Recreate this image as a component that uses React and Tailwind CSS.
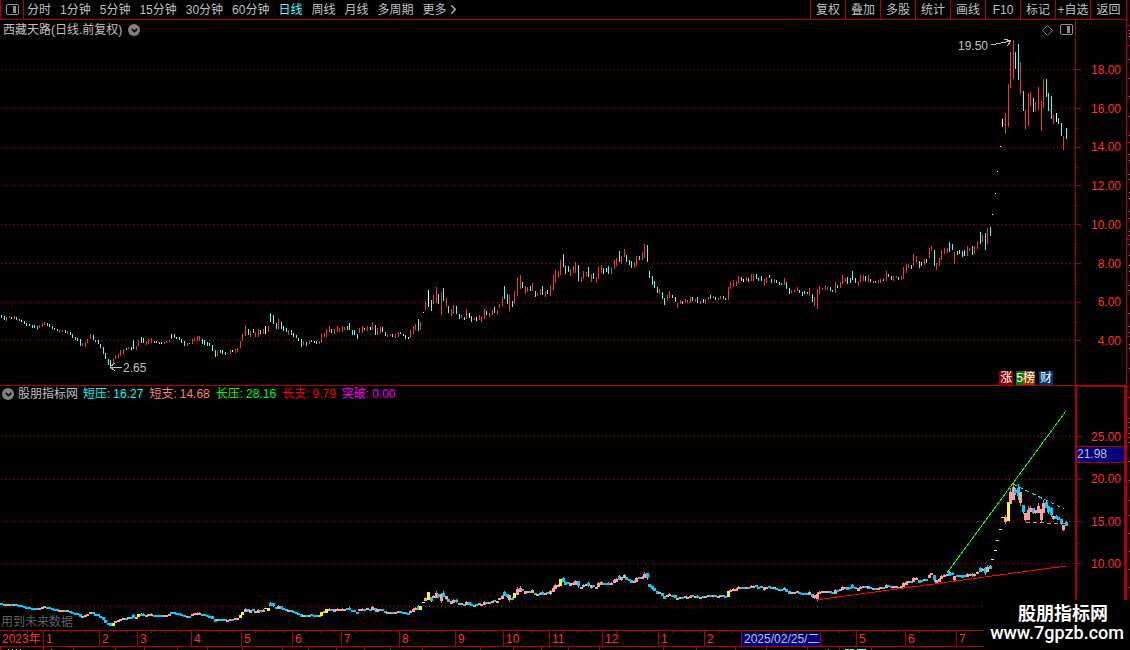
import { ChevronDown, ChevronRight } from 'lucide-react'

// One token per bar: kind + high/low in price-chart rows.
// c falling, r rising, w flat, y rising breakout, z flat breakout
const BARS = `
c315-318 c316-320 r317-321 r316-318 c317-319 r316-319 c317-320 c319-321 w320-322 c321-324 c323-326 c324-326
c325-328 c325-328 c326-329 r325-328 r323-327 r322-325 c323-326 c324-327 c326-329 c328-330 c329-331 r330-333
r330-332 c330-333 r331-334 c332-335 c334-338 c337-340 c338-341 c339-346 r343-346 r342-347 r339-343 r334-339
c335-340 c340-342 c340-344 c344-348 c347-354 c353-359 c359-365 c360-367 y359-364 r355-359 r354-358 r350-356
r349-354 c348-350 r347-349 c347-350 c340-349 r346-350 y340-346 c337-343 c338-343 r341-345 r339-344 r338-343
c341-343 c341-343 c342-344 w342-344 r342-344 r341-343 r340-342 c334-339 c334-338 c337-339 c337-340 c339-343
c341-346 r343-346 c343-344 r339-344 r338-341 r336-341 r336-341 c339-344 c340-345 c342-346 c343-346 c345-351
c350-357 r351-356 c350-353 c350-354 c352-355 r353-354 r350-354 w350-352 r349-353 r348-352 y341-348 y334-341
r326-336 c329-335 r331-337 c329-333 r332-337 r329-337 c330-334 r329-334 z326-334 y326-332 c313-322 c315-324
c323-329 r319-329 c322-329 c326-331 c328-332 r330-335 c330-335 c333-337 c335-338 c338-341 c339-347 r341-345
c342-346 r341-344 c340-342 c341-343 c341-344 r341-344 y334-343 r333-337 y329-337 r326-332 c329-333 r329-334
r326-332 r328-332 r326-332 r327-330 c326-330 c323-330 c330-335 c330-335 c334-339 r328-333 r326-333 c328-330
r326-331 w327-330 r322-330 c325-335 r328-335 r327-333 c327-332 c332-336 r334-337 r334-336 c334-337 r334-338
r332-337 c332-334 c334-336 c335-339 w337-339 r330-338 r326-334 r324-330 c319-331 y322-330 z312-313 r301-310
z290-307 c300-311 r295-304 r287-303 c294-304 r292-315 c288-301 r298-307 c306-313 r309-316 r305-314 c306-314
c314-319 r315-318 c317-320 r309-319 w313-318 c316-322 r318-320 w317-321 r315-320 r317-322 r309-319 c311-315
r313-317 r310-315 c307-313 r310-315 r304-308 r297-306 c286-299 c294-304 r295-311 c301-307 y291-304 r278-296
r275-289 c282-288 r286-294 r287-292 c286-291 r283-291 c291-297 r293-296 r289-295 c286-295 r291-297 c290-294
r285-296 r275-290 r270-283 r271-278 y260-275 c254-267 c266-274 c266-272 r269-276 r266-273 r262-273 c265-281
r277-282 r271-279 r272-276 c267-277 r274-282 c273-279 r277-283 r267-279 r265-273 c268-274 c268-272 c266-274
r267-274 r260-269 r258-266 c251-262 r256-264 r249-257 c255-262 c260-265 c261-268 r262-268 r256-266 c256-260
r252-260 r244-258 c245-262 c271-278 c276-285 c281-288 c287-293 r289-294 c292-299 c298-305 r295-301 r291-298
c295-298 c297-302 r303-308 r300-304 c301-304 r299-303 r300-303 r297-303 c297-301 r299-302 c297-303 r301-304
c299-303 r299-304 r297-300 c295-299 r296-298 c297-300 r298-300 r296-299 c296-299 c298-300 y287-300 r282-289
r280-287 r281-286 r276-283 c277-281 w279-282 r277-281 c278-282 r274-281 r274-281 c274-279 c278-281 c276-281
r279-286 r277-283 c275-278 c279-283 r279-283 c280-283 c282-285 c283-285 r278-285 c282-289 c288-294 r290-293
r290-292 r287-291 c290-293 c292-296 c291-294 c292-294 r288-296 c294-302 r297-306 r289-309 r286-294 r288-290
r286-290 r287-290 c287-291 c290-292 r282-293 c285-288 r282-288 r275-284 r278-282 c277-284 c278-283 c271-280
c278-283 r281-286 r275-282 r275-281 c276-281 r275-282 c279-282 r281-283 c281-283 r280-283 r279-283 c279-281
r271-281 c274-277 c276-280 r276-281 r276-278 c277-280 r276-280 r267-279 r264-273 r264-268 c265-269 r254-266
r256-263 c261-268 c262-266 r259-265 c259-263 r248-258 r246-251 c250-266 r263-270 r258-266 r250-260 r248-254
r248-253 c242-252 c244-250 r252-264 c251-255 c250-254 c251-257 c250-256 r246-256 r248-251 c246-255 r246-254
r241-249 c232-244 r235-242 c233-250 r228-244 c227-236 z214-215 z193-194 z171-172 z146-147 z119-127 r113-134
y84-127 r52-88 r40-79 c52-69 c44-80 r62-94 c91-111 r110-129 r93-126 r92-106 c98-112 r102-111 r87-110
r101-131 r79-108 c79-97 c93-111 c96-119 r115-124 w113-122 c118-124 c123-136 r136-150 c128-139
`
  .trim()
  .split(/\s+/)
  .map((t) => {
    const [high, low] = t.slice(1).split('-').map(Number)
    return { kind: t[0], high, low }
  })

const barX = (i) => 1 + Math.round((i * 1065) / (BARS.length - 1))

// price row -> indicator row (the lower pane has a flatter scale)
const toLower = (y) => Math.round(648.5 - ((418.2 - y) / 19.37) * 8.49)

const UPPER = { c: '#54fcfc', r: '#ff3232', w: '#ffffff', y: '#ff3232', z: '#ffffff' }
const LOWER = { c: '#00d0ff', r: '#ffa0a0', w: '#00d0ff', y: '#ffff00', z: '#ffff00' }
const WICK = { c: '#00e8ff', r: '#ff6060', w: '#00e8ff', y: '#ffff00', z: '#ffff00' }

const PERIODS = ['分时', '1分钟', '5分钟', '15分钟', '30分钟', '60分钟', '日线', '周线', '月线', '多周期', '更多']
const TOOLS = ['复权', '叠加', '多股', '统计', '画线', 'F10', '标记', '+自选', '返回']
const PRICES = ['18.00', '16.00', '14.00', '12.00', '10.00', '8.00', '6.00', '4.00']
const PRICE_ROWS = [69, 108, 147, 185, 224, 263, 302, 340]
const LEVELS = ['25.00', '20.00', '15.00', '10.00']
const LEVEL_ROWS = [436, 479, 521, 563]

const READINGS = [
  { label: '短压:', value: '16.27', color: 'text-[#00ffff]' },
  { label: '短支:', value: '14.68', color: 'text-[#ff8080]' },
  { label: '长压:', value: '28.16', color: 'text-[#00ff00]' },
  { label: '长支:', value: '9.79', color: 'text-[#ff0000]' },
  { label: '突破:', value: '0.00', color: 'text-[#ff00ff]' },
]

// label and number of chart pixels the month covers
const MONTHS = [
  ['2023年', 43], ['1', 56], ['2', 38], ['3', 54], ['4', 50], ['5', 51], ['6', 49], ['7', 58], ['8', 56],
  ['9', 48], ['10', 46], ['11', 53], ['12', 56], ['1', 46], ['2', 37], ['2025/02/25/二', 115], ['5', 49],
  ['6', 51], ['7', 119],
]

function PaneIcon({ className }) {
  return (
    <svg className={className} width="13" height="12" viewBox="0 0 13 12" shapeRendering="crispEdges" aria-hidden="true">
      <path d="M1 0h11v1h1v9h-1v1H1v-1H0V1h1zM1 1v9h11V1z" fill="#909090" fillRule="evenodd" />
      <rect x="7" y="2" width="3" height="7" fill="#909090" />
    </svg>
  )
}

function CollapseButton({ label }) {
  return (
    <button aria-label={label} className="flex size-3 items-center justify-center rounded-full bg-[#808080] text-black">
      <ChevronDown size={9} strokeWidth={4} />
    </button>
  )
}

function Toolbar() {
  return (
    <header className="flex h-5 items-stretch border-b border-[#b00000]">
      <button aria-label="侧栏" className="flex w-6 items-center justify-center border-x border-[#b00000]">
        <PaneIcon />
      </button>
      <nav className="ml-[3px] flex flex-1 items-center gap-[9px] whitespace-nowrap">
        {PERIODS.map((p) => (
          <button key={p} className={p === '日线' ? 'text-[#54fcfc]' : ''}>{p}</button>
        ))}
        <ChevronRight size={15} strokeWidth={2} className="-ml-2.5" />
      </nav>
      <nav className="flex">
        {TOOLS.map((t) => (
          <button key={t} className="w-[35px] border-l border-[#b00000] whitespace-nowrap last:w-[36px]">{t}</button>
        ))}
      </nav>
    </header>
  )
}

function Grid({ rows }) {
  return rows.map((y) => (
    <line key={y} x1="1" x2="1075" y1={y + 0.5} y2={y + 0.5} stroke="#b01010" strokeDasharray="1 3" />
  ))
}

function PriceChart() {
  return (
    <svg className="block h-full w-full" viewBox="0 20 1075 365" preserveAspectRatio="xMaxYMin slice" shapeRendering="crispEdges">
      <Grid rows={PRICE_ROWS} />
      {BARS.map((b, i) => (
        <rect key={i} x={barX(i)} y={b.high} width="1" height={b.low - b.high} fill={UPPER[b.kind]} />
      ))}
      <g fill="none" stroke="#c0c0c0">
        <path d="M991 45L1011 41M1004 39L1011 41L1007 46" />
        <path d="M122 367.5H110M115 363L110 367L115 371" />
      </g>
      <g fill="#c0c0c0" fontSize="12">
        <text x="958" y="50">19.50</text>
        <text x="123" y="372">2.65</text>
      </g>
    </svg>
  )
}

function Candle({ bar, prev, x }) {
  const high = toLower(bar.high)
  const low = Math.max(toLower(bar.low), high + 1)
  if (bar.kind === 'z' && low - high < 5) {
    return <rect x={x - 1} y={high} width="3" height="1" fill="#ffff00" />
  }
  if (bar.kind === 'y' || bar.kind === 'z') {
    return <rect x={x - 1} y={high} width="3" height={Math.max(low - high, 3)} fill={LOWER[bar.kind]} />
  }
  const mid = (high + low) / 2
  const prevMid = (toLower(prev.high) + toLower(prev.low)) / 2
  const reach = Math.max(1, (low - high) / 4)
  const top = Math.round(Math.max(high, Math.min(mid, prevMid) - reach))
  const bottom = Math.max(Math.round(Math.min(low, Math.max(mid, prevMid) + reach)), top + 2)
  return (
    <>
      <rect x={x} y={high} width="1" height={low - high} fill={WICK[bar.kind]} />
      <rect x={x - 1} y={top} width="3" height={bottom - top} fill={LOWER[bar.kind]} />
    </>
  )
}

function IndicatorChart() {
  return (
    <svg className="block h-full w-full" viewBox="0 386 1075 244" preserveAspectRatio="xMaxYMin slice" shapeRendering="crispEdges">
      <Grid rows={[...LEVEL_ROWS, 606]} />
      {BARS.map((b, i) => (
        <Candle key={i} bar={b} prev={BARS[i - 1] ?? b} x={barX(i)} />
      ))}
      <g fill="none">
        <path d="M947 573L1066 411" stroke="#00ff00" />
        <path d="M816 600L1066 566" stroke="#ff0000" />
        <path d="M1013 484L1064 509" stroke="#00e8ff" strokeDasharray="4 3" />
        <path d="M1026 522L1066 524" stroke="#ff8080" strokeDasharray="4 3" />
      </g>
    </svg>
  )
}

// Major ticks sit beside the labels, minor ones halfway between
function Ticks({ rows, top, height }) {
  const step = rows[1] - rows[0]
  return (
    <svg className="block shrink-0" width="6" height={height} viewBox={`0 ${top} 6 ${height}`} shapeRendering="crispEdges" fill="#b00000">
      {rows.map((y, i) => (
        <g key={y}>
          <rect x="0" y={y} width="5" height="1" />
          {i < rows.length - 1 && <rect x="0" y={y + Math.round(step / 2)} width="2" height="1" />}
        </g>
      ))}
    </svg>
  )
}

function TimeAxis() {
  return (
    <div className="flex h-[17px] border-y border-[#b00000] text-[#ff3232]">
      {MONTHS.map(([label, span], i) => {
        const picked = label.includes('/')
        // the 1px divider is not part of what grows
        const grow = i === 0 ? span : span - 1
        return (
          <div key={i} className="flex min-w-0 basis-0 flex-col border-l border-[#b00000] first:border-l-0" style={{ flexGrow: grow }}>
            <div className="h-0.5 shrink-0 bg-[repeating-linear-gradient(90deg,transparent_0_13px,#b00000_13px_14px)]" />
            <div className="flex h-[13px] items-center">
              <span className={picked ? 'border-r border-[#b00000] bg-[#000080] pr-px pl-0.5 leading-[13px] whitespace-nowrap text-[#c0c0c0]' : 'pl-0.5 leading-[13px] whitespace-nowrap'}>
                {label}
              </span>
            </div>
          </div>
        )
      })}
      <div className="w-[51px] shrink-0" />
    </div>
  )
}

// Edge of the neighbouring window below
function BottomEdge() {
  const marks = [0, 43, 73, 115, 144, 177, 207, 242, 282, 308, 336, 364, 390, 422, 480, 513, 541, 568, 599, 663, 696, 735, 766, 807, 839, 871]
  return (
    <svg className="block" width="984" height="3" viewBox="0 0 984 3" shapeRendering="crispEdges">
      {marks.map((x) => <rect key={x} x={x} y="0" width="1" height="3" fill="#b00000" />)}
      {[8, 12, 16, 20, 51, 828].map((x) => <rect key={x} x={x} y="2" width="1" height="1" fill="#c0c0c0" />)}
      <path d="M845 2h4v1h-4zM850 2h4v1h-4zM857 2h9v1h-9z" fill="#54fcfc" />
    </svg>
  )
}

// Edge of the quote panel on the right
function RightEdge() {
  const marks = [25, 45, 142, 239, 336, 397, 418, 437]
  const specks = [30, 33, 36, 59, 78, 96, 116, 135, 154, 160, 174, 179, 192, 198, 211, 218, 231, 235, 244, 255, 265, 271, 285, 290, 313, 326, 332, 344, 348, 368, 422, 427, 433, 442, 461, 480, 500, 515, 533, 551, 569, 587]
  return (
    <svg className="block" width="4" height="600" viewBox="0 0 4 600" shapeRendering="crispEdges">
      <rect x="0" y="0" width="1" height="600" fill="#b00000" />
      {marks.map((y) => <rect key={y} x="1" y={y} width="3" height="1" fill="#b00000" />)}
      {specks.map((y) => <rect key={y} x="3" y={y} width="1" height="1" fill="#c0c0c0" />)}
    </svg>
  )
}

export default function App() {
  return (
    <div className="relative flex min-h-screen overflow-hidden bg-black font-['Liberation_Sans','Noto_Sans_CJK_SC',sans-serif] text-[12px] leading-4 text-[#c0c0c0]">
      <main className="flex min-w-0 flex-1 flex-col">
        <Toolbar />

        {/* Price pane */}
        <section className="flex h-[366px]">
          <div className="relative min-w-0 flex-1 border-b border-[#b00000]">
            <PriceChart />
            <div className="absolute top-0.5 left-[3px] flex items-center gap-1.5">
              <h1>西藏天路(日线.前复权)</h1>
              <CollapseButton label="展开股票信息" />
            </div>
            <div className="absolute top-1 right-0.5 flex items-center gap-[7px]">
              <svg width="11" height="11" viewBox="0 0 11 11" fill="none" stroke="#808080" aria-hidden="true">
                <path d="M5.5 .5l5 5-5 5-5-5z" />
              </svg>
              <PaneIcon />
            </div>
            <div className="absolute right-[22px] bottom-0 flex items-center leading-[14px] text-white">
              <span className="mr-[3px] bg-[#900000] px-px">涨</span>
              <span className="bg-[#008000]">5</span>
              <span className="mr-1 bg-[#904000]">榜</span>
              <span className="bg-[#003870] px-px">财</span>
            </div>
          </div>
          <div className="flex w-[51px] border-b border-l border-[#b00000]">
            <Ticks rows={PRICE_ROWS} top={20} height={365} />
            <div className="flex h-[329px] flex-1 flex-col justify-between pt-[42px] pr-[5px] text-right text-[#ff3232]">
              {PRICES.map((p) => <span key={p}>{p}</span>)}
            </div>
          </div>
        </section>

        {/* Indicator pane */}
        <section className="flex h-[244px]">
          <div className="relative min-w-0 flex-1">
            <IndicatorChart />
            <div className="absolute top-0 left-0.5 flex items-center whitespace-nowrap">
              <CollapseButton label="展开指标" />
              <h2 className="mr-[5px] ml-1">股朋指标网</h2>
              <dl className="flex gap-1.5">
                {READINGS.map((r) => (
                  <div key={r.label} className={`flex gap-[3px] ${r.color}`}>
                    <dt>{r.label}</dt>
                    <dd>{r.value}</dd>
                  </div>
                ))}
              </dl>
            </div>
            <p className="absolute bottom-0 left-px text-[#606060]">用到未来数据</p>
          </div>
          <div className="relative flex w-[51px] border-x-2 border-t border-[#b00000]">
            <Ticks rows={LEVEL_ROWS} top={387} height={243} />
            <div className="flex h-[185px] flex-1 flex-col justify-between pt-[42px] pr-[3px] text-right text-[#ff3232]">
              {LEVELS.map((l) => <span key={l}>{l}</span>)}
            </div>
            <output className="absolute inset-x-0 top-[59px] h-[17px] border-y border-[#b00000] bg-[#000080] leading-[14px]">21.98</output>
          </div>
        </section>

        <TimeAxis />
        <BottomEdge />
      </main>
      <RightEdge />

      <a href="#site" className="absolute right-0 bottom-0 flex h-[50px] w-[146px] flex-col items-end bg-black pt-1 pr-1.5 text-white">
        <span className="mr-4 text-[18px] leading-[20px] font-bold">股朋指标网</span>
        <span className="font-['Roboto',sans-serif] text-[18px] leading-[18px] font-medium">www.7gpzb.com</span>
      </a>
    </div>
  )
}
